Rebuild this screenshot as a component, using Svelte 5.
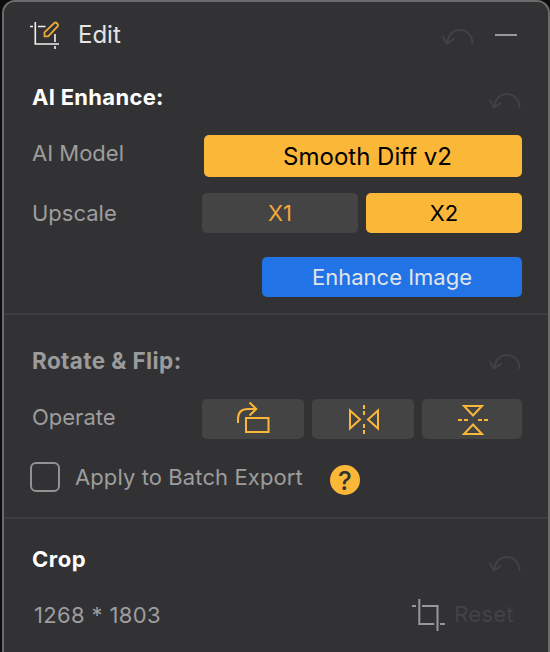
<script lang="ts">
    let scale = $state(2);
    let batch = $state(false);
</script>

{#snippet undo()}
    <button class="undo" aria-label="Undo">
        <svg width="34" height="18" viewBox="0 0 34 18">
            <path d="M6.500 15C7 7 12 2 19 2s12.500 5.500 12.500 14" />
            <path d="M1.500 8L6 15.500L13.500 10.500" />
        </svg>
    </button>
{/snippet}

<div class="panel">
    <header>
        <svg class="edit-icon" width="32" height="32" viewBox="0 0 32 32">
            <path class="frame" d="M0 7.500h3M8 7.500h7.500M5.300 3v22H29M25 15v8M25 27v3" />
            <path class="pencil" d="M14.500 17.300v-4L24.300 4q1.200-1 2.300 0l1 1q1 1.100 0 2.300L18.200 17.300z" />
        </svg>
        <span class="name">Edit</span>
        {@render undo()}
        <button class="collapse" aria-label="Collapse"></button>
    </header>

    <section class="enhance">
        <div class="title">
            <h2>AI Enhance:</h2>
            {@render undo()}
        </div>
        <div class="row model">
            <span class="label">AI Model</span>
            <button class="btn active select">Smooth Diff v2</button>
        </div>
        <div class="row upscale">
            <span class="label">Upscale</span>
            {#each [1, 2] as s}
                <button class="btn" class:active={scale === s} onclick={() => (scale = s)}>X{s}</button>
            {/each}
        </div>
        <button class="btn primary">Enhance Image</button>
    </section>

    <section class="rotate">
        <div class="title">
            <h2 class="muted">Rotate &amp; Flip:</h2>
            {@render undo()}
        </div>
        <div class="row operate">
            <span class="label">Operate</span>
            <button class="btn" aria-label="Rotate">
                <svg width="40" height="40" viewBox="0 0 40 40">
                    <path d="M13 19h22.500v14H13zM5 24v-4Q5 10 15 10h8M16.500 3.500l6.800 6.500l-6.800 6.500" />
                </svg>
            </button>
            <button class="btn" aria-label="Flip horizontally">
                <svg width="40" height="40" viewBox="0 0 40 40">
                    <path d="M7 11.500v18L17 20.500zM35 11.500v18L25 20.500zM21 6v4M21 12v4M21 25v4M21 31v4" />
                </svg>
            </button>
            <button class="btn last" aria-label="Flip vertically">
                <svg width="40" height="40" viewBox="0 0 40 40">
                    <path d="M12 7h18l-9 9.500zM12 35h18l-9-9.500zM6 21h4M12 21h4M26 21h4M32 21h4" />
                </svg>
            </button>
        </div>
        <div class="row batch">
            <label>
                <input type="checkbox" bind:checked={batch} />
                <span>Apply to Batch Export</span>
            </label>
            <button class="help">?</button>
        </div>
    </section>

    <section class="crop">
        <div class="title">
            <h2>Crop</h2>
            {@render undo()}
        </div>
        <div class="row size">
            <span class="dims">1268 * 1803</span>
            <svg class="crop-icon" width="34" height="34" viewBox="0 0 34 34">
                <path d="M0 8h4M10 8h15.500v25M7.300 1v25h15M28 26h5" />
            </svg>
            <span class="reset">Reset</span>
        </div>
    </section>
</div>

<style>
    :global(body) {
        background: #0c0c0c;
        overflow: hidden;
    }

    .panel {
        box-sizing: border-box;
        width: 548px;
        height: 652px;
        margin-left: 2px;
        border: 2px solid #6b6b6c;
        border-bottom: none;
        border-radius: 13px 13px 0 0;
        background: #323234;
        font-family: Inter, "Liberation Sans", sans-serif;
        font-size: 22px;
        color: #9d9d9e;
        overflow: hidden;
    }

    button {
        padding: 0;
        border: none;
        background: none;
        font: inherit;
        color: inherit;
    }

    svg {
        display: block;
        fill: none;
    }

    header,
    .title,
    .row,
    label {
        display: flex;
        align-items: center;
    }

    header {
        height: 66px;
        padding: 0 31px 0 26px;
    }

    .edit-icon .frame {
        stroke: #f0f0f0;
        stroke-width: 1.6;
    }

    .edit-icon .pencil {
        stroke: #eda93a;
        stroke-width: 1.8;
    }

    .name {
        margin: 0 0 2px 16px;
        font-size: 24px;
        color: #e4e4e4;
    }

    .undo {
        margin-left: auto;
    }

    .undo path {
        stroke: #424244;
        stroke-width: 2;
    }

    header .undo {
        margin: 3px 20px 0 auto;
    }

    .collapse {
        width: 22px;
        height: 2px;
        background: #98989a;
    }

    section {
        box-sizing: border-box;
        padding: 0 26px 0 28px;
    }

    section + section {
        border-top: 2px solid #3d3d3f;
    }

    .enhance {
        height: 245px;
    }

    .rotate {
        height: 204px;
    }

    .title {
        height: 60px;
    }

    .title .undo {
        margin-top: 5px;
    }

    h2 {
        margin: 0 0 2px;
        font-size: 22px;
        font-weight: 700;
        letter-spacing: 0.3px;
        color: #fff;
    }

    h2.muted {
        margin: 2px 0 0;
        font-size: 22.5px;
        letter-spacing: 0.4px;
        color: #9b9b9c;
    }

    .label {
        width: 170px;
        flex: none;
    }

    .btn {
        display: flex;
        align-items: center;
        justify-content: center;
        flex: 1;
        height: 40px;
        border-radius: 5px;
        background: #444445;
        color: #f3a73a;
    }

    .btn.active {
        background: #fbb738;
        color: #000;
    }

    .btn.select {
        height: 42px;
        margin-left: 2px;
        padding-left: 9px;
        font-size: 24px;
    }

    .btn path {
        stroke: #fbb738;
        stroke-width: 2;
    }

    .model {
        margin-top: 7px;
    }

    .model .label {
        margin-bottom: 6px;
    }

    .upscale {
        margin-top: 16px;
    }

    .upscale .btn + .btn {
        margin-left: 8px;
    }

    .btn.primary {
        width: 260px;
        margin: 24px 0 0 auto;
        background: #2173e6;
        color: #e2e4e8;
    }

    .rotate .title {
        height: 84px;
        padding-top: 5px;
        box-sizing: border-box;
    }

    .operate .btn {
        flex: none;
        width: 102px;
        margin-right: 8px;
    }

    .operate .btn.last {
        width: 100px;
        margin-right: 0;
    }

    .operate .label {
        margin-bottom: 4px;
    }

    .batch {
        margin: 23px 0 0 -2px;
        height: 30px;
        letter-spacing: 0.1px;
    }

    input {
        appearance: none;
        box-sizing: border-box;
        width: 30px;
        height: 30px;
        margin: 0 15px 0 0;
        border: 2px solid #929293;
        border-radius: 6px;
    }

    .help {
        width: 30px;
        height: 30px;
        margin: 6px 0 0 27px;
        border-radius: 50%;
        background: #fbb738;
        color: #323234;
        font-size: 26px;
        font-weight: 500;
        line-height: 31px;
    }

    .crop .title {
        height: 80px;
    }

    .crop h2 {
        margin-bottom: 0;
        letter-spacing: 0.5px;
    }

    .crop .undo {
        margin-top: 10px;
    }

    .size {
        height: 34px;
    }

    .dims {
        margin: 0 auto 2px 2px;
        font-feature-settings: "calt" 0;
        letter-spacing: 0.35px;
    }

    .crop-icon {
        margin-bottom: 2px;
    }

    .crop-icon path {
        stroke: #98989a;
        stroke-width: 2;
    }

    .reset {
        margin: 0 8px 4px 8px;
        letter-spacing: 0.3px;
        color: #434345;
    }
</style>
